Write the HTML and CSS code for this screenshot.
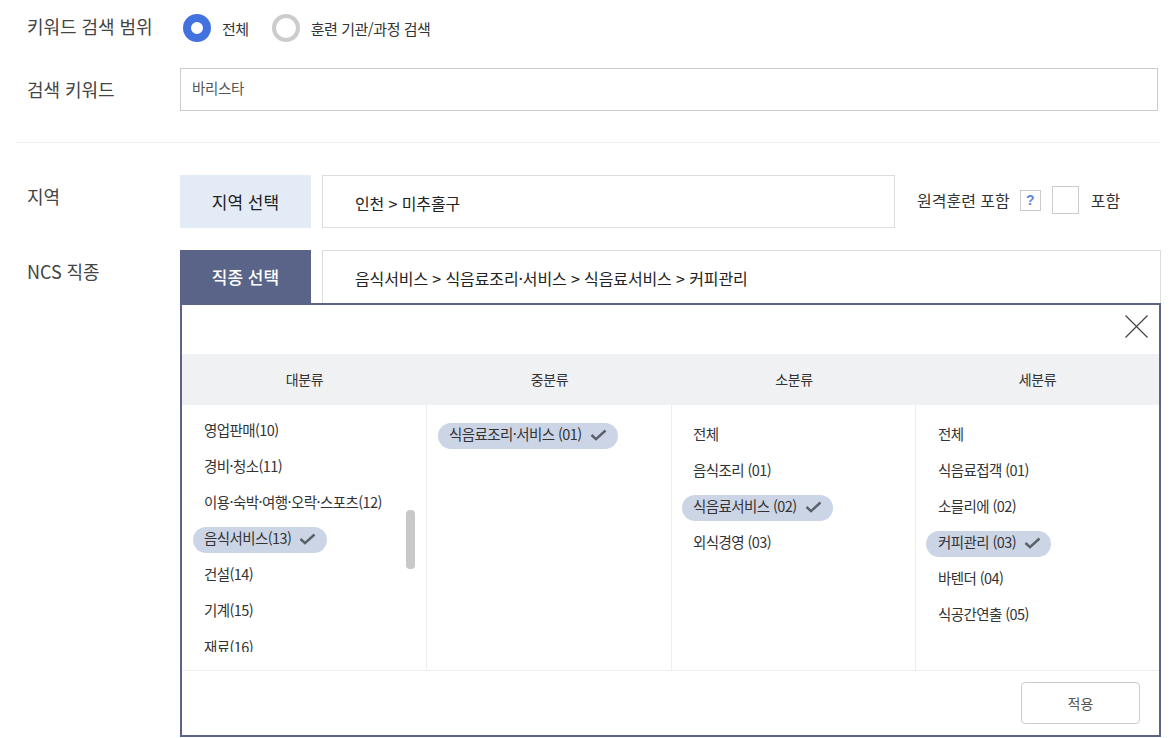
FILE: index.html
```html
<!DOCTYPE html>
<html lang="ko">
<head>
<meta charset="utf-8">
<title>검색</title>
<link rel="stylesheet" href="styles.css">
</head>
<body>
<main class="page">
  <div class="row row-scope">
    <div class="label label-scope">키워드 검색 범위</div>
    <div class="radios">
      <span class="radio radio-on"></span><span class="radio-text">전체</span>
      <span class="radio radio-off"></span><span class="radio-text">훈련 기관/과정 검색</span>
    </div>
  </div>
  <div class="row row-keyword">
    <div class="label label-keyword">검색 키워드</div>
    <div class="keyword-input">바리스타</div>
  </div>
  <div class="separator"></div>
  <div class="row row-region">
    <div class="label label-region">지역</div>
    <div class="pick pick-light">지역 선택</div>
    <div class="field field-region">인천 &gt; 미추홀구</div>
    <div class="remote">
      <span class="remote-text">원격훈련 포함</span>
      <span class="help">?</span>
      <span class="checkbox"></span>
      <span class="remote-check">포함</span>
    </div>
  </div>
  <div class="row row-ncs">
    <div class="label label-region">NCS 직종</div>
    <div class="pick pick-dark">직종 선택</div>
    <div class="field field-ncs">음식서비스 &gt; 식음료조리·서비스 &gt; 식음료서비스 &gt; 커피관리</div>
  </div>
  <section class="panel">
    <div class="panel-top">
      <svg class="close" width="23" height="23" viewBox="0 0 23 23"><path d="M0.5 0.5L22.5 22.5M22.5 0.5L0.5 22.5" stroke="#444" stroke-width="1.2" fill="none"/></svg>
    </div>
    <div class="heads">
      <div>대분류</div><div>중분류</div><div>소분류</div><div>세분류</div>
    </div>
    <div class="cols">
      <div class="col col-first">
        <ul class="list list-first">
          <li><span class="item">영업판매(10)</span></li>
          <li><span class="item">경비·청소(11)</span></li>
          <li><span class="item">이용·숙박·여행·오락·스포츠(12)</span></li>
          <li><span class="item on">음식서비스(13)<svg class="check" width="17" height="12" viewBox="0 0 17 12"><path d="M1.5 6L6 10.2L15.5 1.5" stroke="#5b5f68" stroke-width="2.4" fill="none"/></svg></span></li>
          <li><span class="item">건설(14)</span></li>
          <li><span class="item">기계(15)</span></li>
          <li><span class="item">재료(16)</span></li>
        </ul>
        <div class="scrollbar"></div>
      </div>
      <div class="col">
        <ul class="list">
          <li><span class="item on">식음료조리·서비스 (01)<svg class="check" width="17" height="12" viewBox="0 0 17 12"><path d="M1.5 6L6 10.2L15.5 1.5" stroke="#5b5f68" stroke-width="2.4" fill="none"/></svg></span></li>
        </ul>
      </div>
      <div class="col col-tight">
        <ul class="list">
          <li><span class="item">전체</span></li>
          <li><span class="item">음식조리 (01)</span></li>
          <li><span class="item on">식음료서비스 (02)<svg class="check" width="17" height="12" viewBox="0 0 17 12"><path d="M1.5 6L6 10.2L15.5 1.5" stroke="#5b5f68" stroke-width="2.4" fill="none"/></svg></span></li>
          <li><span class="item">외식경영 (03)</span></li>
        </ul>
      </div>
      <div class="col col-tight col-last">
        <ul class="list">
          <li><span class="item">전체</span></li>
          <li><span class="item">식음료접객 (01)</span></li>
          <li><span class="item">소믈리에 (02)</span></li>
          <li><span class="item on">커피관리 (03)<svg class="check" width="17" height="12" viewBox="0 0 17 12"><path d="M1.5 6L6 10.2L15.5 1.5" stroke="#5b5f68" stroke-width="2.4" fill="none"/></svg></span></li>
          <li><span class="item">바텐더 (04)</span></li>
          <li><span class="item">식공간연출 (05)</span></li>
        </ul>
      </div>
    </div>
    <div class="panel-foot">
      <div class="apply">적용</div>
    </div>
  </section>
</main>
</body>
</html>
```
FILE: styles.css
```css
* { box-sizing: border-box; }
html, body { margin: 0; padding: 0; background: #fff; }
body {
  width: 1176px;
  height: 738px;
  overflow: hidden;
  font-family: "Noto Sans CJK KR", "Noto Sans", sans-serif;
  color: #222;
}
ul { list-style: none; margin: 0; padding: 0; }
.page { padding-top: 14px; }
.row { display: flex; padding-left: 27px; }
.label {
  width: 153px;
  flex: none;
  font-size: 18px;
  letter-spacing: -0.05px;
  color: #444;
  line-height: 26px;
}
.row-scope { height: 28px; }
.label-scope { line-height: 24px; }
.radios { display: flex; align-items: center; padding-left: 3px; }
.radio { width: 28px; height: 28px; border-radius: 50%; flex: none; background: #fff; }
.radio-on { border: 8px solid #4272e0; }
.radio-off { border: 4px solid #ccc; margin-left: 23px; }
.radio-text { font-size: 15px; letter-spacing: -0.45px; margin-left: 11px; color: #333; line-height: 28px; position: relative; top: 1px; }
.row-keyword { margin-top: 26px; height: 43px; }
.label-keyword { line-height: 42px; }
.keyword-input {
  width: 978px;
  height: 43px;
  border: 1px solid #ccc;
  padding-left: 11px;
  font-size: 14.5px;
  letter-spacing: -0.3px;
  line-height: 38px;
  color: #555;
}
.separator { height: 1px; margin: 31px 16px 0; background: #f2f2f2; }
.row-region { margin-top: 32px; height: 53px; }
.label-region { line-height: 42px; }
.pick {
  width: 131px;
  flex: none;
  text-align: center;
  font-size: 17px;
  letter-spacing: 0;
  line-height: 54px;
}
.pick-light { background: #e3ebf6; color: #222; }
.pick-dark { background: #5a6488; color: #fff; font-weight: 500; }
.field {
  margin-left: 11px;
  border: 1px solid #ddd;
  padding-left: 32px;
  font-size: 16px;
  letter-spacing: -0.12px;
  line-height: 54px;
  color: #222;
}
.field-region { width: 573px; }
.remote { display: flex; align-items: center; margin-left: 22px; height: 50px; }
.remote-text { font-size: 16px; letter-spacing: 0; color: #333; }
.help {
  width: 21px;
  height: 21px;
  margin-left: 10px;
  border: 1px solid #ccc;
  color: #5f86d8;
  font-family: "Liberation Sans", sans-serif;
  font-weight: 700;
  font-size: 14px;
  line-height: 19px;
  text-align: center;
}
.checkbox { width: 27px; height: 28px; margin-left: 11px; border: 1px solid #ccc; }
.remote-check { font-size: 16px; margin-left: 12px; color: #333; }
.row-ncs { margin-top: 22px; height: 53px; }
.field-ncs { width: 839px; border-bottom: 0; }
.panel {
  width: 981px;
  height: 434px;
  margin-left: 180px;
  border: 2px solid #5a6488;
  display: flex;
  flex-direction: column;
  position: relative;
  background: #fff;
}
.panel-top { height: 49px; display: flex; justify-content: flex-end; padding: 10px 11px 0 0; }
.close { display: block; }
.heads {
  height: 51px;
  background: #f0f1f3;
  display: grid;
  grid-template-columns: 245px 245px 244px 1fr;
  text-align: center;
  font-size: 14px;
  letter-spacing: -0.3px;
  line-height: 50px;
  color: #333;
}
.cols {
  height: 266px;
  display: grid;
  grid-template-columns: 245px 245px 244px 1fr;
  border-bottom: 1px solid #eee;
}
.col { border-right: 1px solid #eee; padding-top: 18px; position: relative; }
.col:last-child { border-right: 0; }
.col-first { padding-top: 14px; }
.list li { display: flex; height: 26px; margin-bottom: 10px; padding-left: 11px; }
.col-tight .list li { padding-left: 10px; }
.list-first { height: 233px; overflow: hidden; }
.list-first li { margin-bottom: 10.1px; }
.item {
  display: flex;
  align-items: center;
  height: 26px;
  padding: 0 11px 4px;
  border-radius: 13px;
  font-size: 14.5px;
  letter-spacing: -0.58px;
  line-height: 22px;
  color: #333;
}
.col-last .item { padding-left: 12px; padding-right: 10px; }
.item.on { background: #ccd5e6; }
.check { margin: 2px 0 0 8px; flex: none; }
.scrollbar {
  position: absolute;
  left: 224px;
  top: 105px;
  width: 9px;
  height: 59px;
  border-radius: 4px;
  background: #c8c8c8;
}
.panel-foot { flex: 1; display: flex; justify-content: flex-end; padding: 11px 19px 0 0; }
.apply {
  width: 119px;
  height: 42px;
  border: 1px solid #ccc;
  border-radius: 4px;
  text-align: center;
  font-size: 14px;
  line-height: 40px;
  color: #555;
}
```
